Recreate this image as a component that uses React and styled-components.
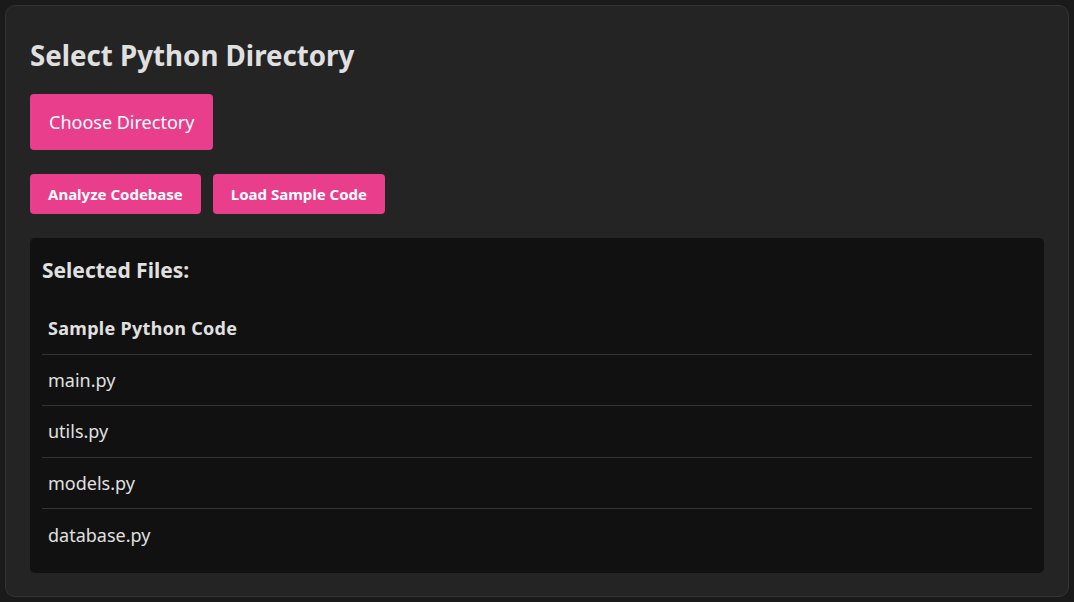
import styled, { createGlobalStyle } from "styled-components";

const GlobalStyle = createGlobalStyle`
  html, body {
    margin: 0;
    padding: 0;
    background: #1a1a1a;
  }
  body {
    font-family: "Noto Sans", "Open Sans", sans-serif;
    color: #e0e0e0;
  }
  *, *::before, *::after {
    box-sizing: border-box;
  }
`;

const Page = styled.div`
  padding: 5px;
  height: 602px;
`;

const Card = styled.section`
  height: 592px;
  background: #242424;
  border: 1px solid #333;
  border-radius: 10px;
  padding: 24px;
  display: flex;
  flex-direction: column;
`;

const Title = styled.h2`
  margin: 0 0 14px;
  font-size: 27.7px;
  line-height: 50px;
  font-weight: 700;
  color: #e0e0e0;
`;

const Button = styled.button`
  background: #e83e8c;
  color: #fff;
  border: none;
  border-radius: 4px;
  font-family: inherit;
  cursor: pointer;
  flex-shrink: 0;
  font-size: ${(p) => (p.$big ? "18px" : "15px")};
  font-weight: ${(p) => (p.$big ? 400 : 700)};
  height: ${(p) => (p.$big ? "56px" : "40px")};
  padding: ${(p) => (p.$big ? "0 19px" : "0 18px")};
  align-self: flex-start;
`;

const ButtonRow = styled.div`
  display: flex;
  gap: 12px;
  margin-top: 24px;
`;

const Panel = styled.div`
  margin-top: 24px;
  background: #111;
  border-radius: 5px;
  padding: 12px;
  flex: 1;
`;

const PanelTitle = styled.h3`
  margin: 0 0 13px;
  font-size: 21px;
  line-height: 40px;
  font-weight: 700;
  color: #e0e0e0;
`;

const FileList = styled.ul`
  list-style: none;
  margin: 0;
  padding: 0;
`;

const FileItem = styled.li`
  height: 51.6px;
  display: flex;
  align-items: center;
  padding: 0 6px;
  font-size: 18px;
  font-weight: ${(p) => (p.$head ? 700 : 400)};
  letter-spacing: ${(p) => (p.$head ? "0.3px" : "0")};
  color: #e0e0e0;
  border-bottom: ${(p) => (p.$last ? "none" : "1px solid #333")};
`;

const files = ["main.py", "utils.py", "models.py", "database.py"];

export default function App() {
  return (
    <Page>
      <GlobalStyle />
      <Card>
        <Title>Select Python Directory</Title>
        <Button $big>Choose Directory</Button>
        <ButtonRow>
          <Button>Analyze Codebase</Button>
          <Button>Load Sample Code</Button>
        </ButtonRow>
        <Panel>
          <PanelTitle>Selected Files:</PanelTitle>
          <FileList>
            <FileItem $head>Sample Python Code</FileItem>
            {files.map((f, i) => (
              <FileItem key={f} $last={i === files.length - 1}>
                {f}
              </FileItem>
            ))}
          </FileList>
        </Panel>
      </Card>
    </Page>
  );
}
